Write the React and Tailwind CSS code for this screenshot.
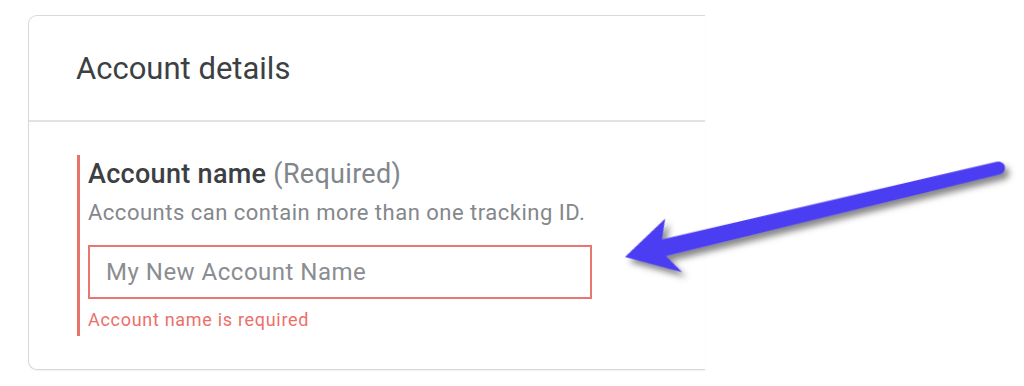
import React from "react";

// annotation arrow drawn over the screenshot
const Arrow = () => {
    return (
        <svg
            className="absolute left-0 top-0 pointer-events-none"
            width="1024"
            height="386"
            viewBox="0 0 1024 386"
        >
            <defs>
                <filter id="arrowShadow" x="-20%" y="-50%" width="140%" height="200%">
                    <feDropShadow dx="3" dy="6" stdDeviation="3" floodColor="#555" floodOpacity="0.7" />
                </filter>
            </defs>
            <g transform="translate(625 257) rotate(-13.4)" filter="url(#arrowShadow)">
                <path
                    d="M0 0 L48 -28 L40 -8.5 L384 -6.5 A6.5 6.5 0 0 1 384 6.5 L40 8.5 L52 28 Z"
                    fill="#4b3cf2"
                />
            </g>
        </svg>
    );
};

const App = () => {
    return (
        <div
            className="relative w-[1024px] h-[386px] bg-white overflow-hidden"
            style={{ fontFamily: "Roboto, 'Liberation Sans', sans-serif" }}
        >
            <div className="pt-[15px] pl-[28px]">
                <div className="w-[677px] border border-r-0 border-[#d9d9d9] rounded-l-[9px] bg-white shadow-[0_1px_2px_rgba(0,0,0,0.06)]">
                    <div className="h-[106px] flex items-center pl-[47px] border-b-2 border-[#e2e2e2]">
                        <h1 className="text-[31px] leading-none text-[#3c4043]">Account details</h1>
                    </div>
                    <div className="pl-[48px] pt-[33px] pb-[33px]">
                        <div className="border-l-[3px] border-[#e8736c] pl-[8px] pt-[6px] pb-[7px] flex flex-col">
                            <label
                                htmlFor="accountName"
                                className="text-[27px] leading-none tracking-[0.3px] text-[#3c4043] font-medium"
                            >
                                Account name <span className="font-normal text-[#80868b]">(Required)</span>
                            </label>
                            <p className="mt-[14px] text-[22px] leading-none tracking-[0.5px] text-[#84878b]">
                                Accounts can contain more than one tracking ID.
                            </p>
                            <input
                                id="accountName"
                                type="text"
                                placeholder="My New Account Name"
                                className="mt-[21px] w-[504px] h-[54px] border-2 border-[#ea776f] pl-[16px] text-[24px] tracking-[0.5px] text-[#3c4043] placeholder:text-[#8a8d91] focus:outline-none"
                            />
                            <span className="mt-[12px] text-[18px] leading-none tracking-[0.7px] text-[#ec6f6a]">
                                Account name is required
                            </span>
                        </div>
                    </div>
                </div>
            </div>
            <Arrow />
        </div>
    );
};

export default App;
